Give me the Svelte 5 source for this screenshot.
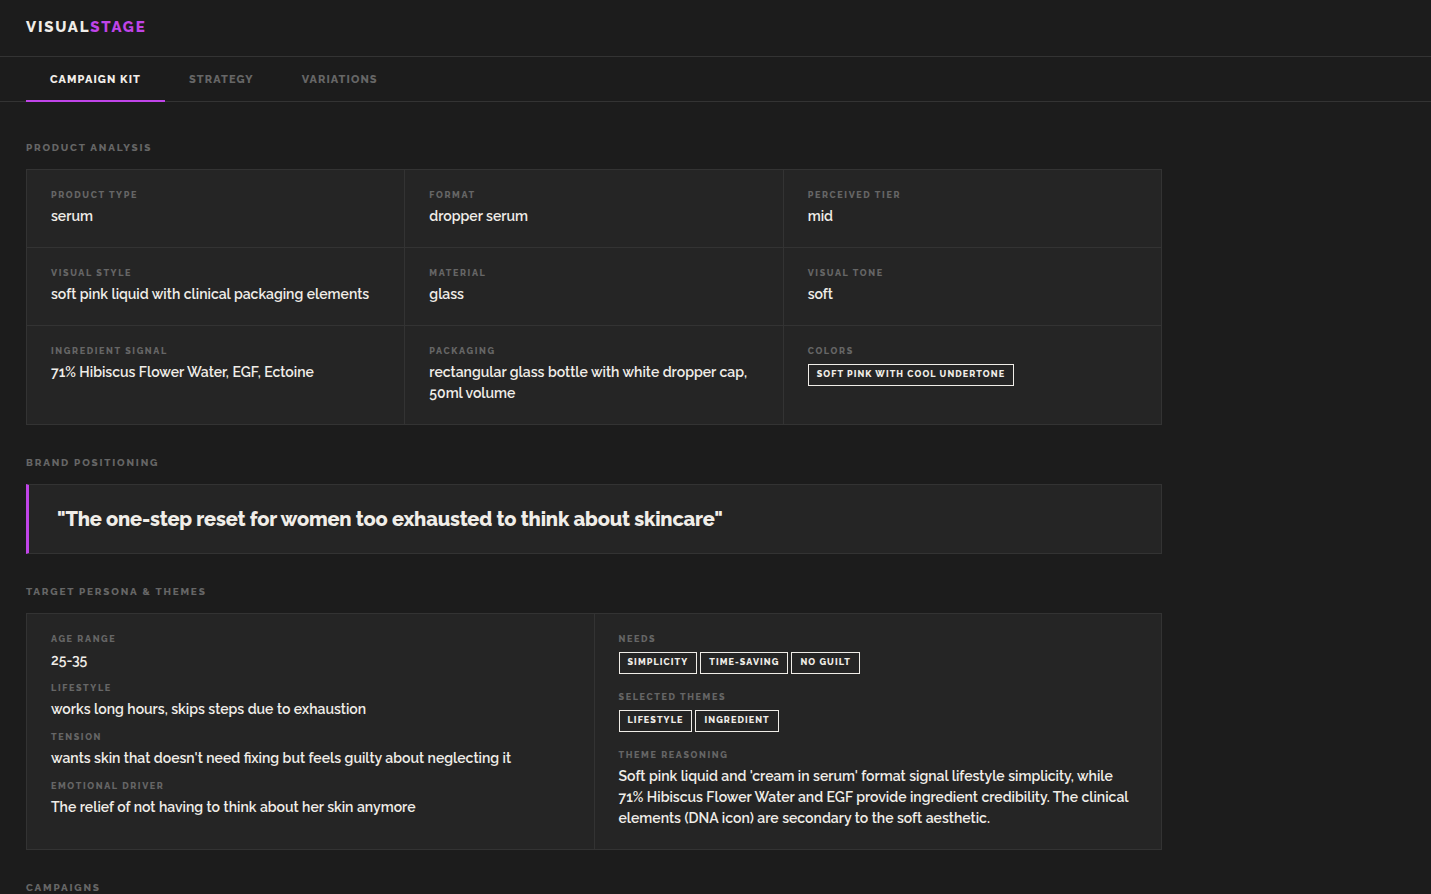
<script lang="ts">
	type Field = {
		label: string;
		value?: string;
		tags?: string[];
	};

	const tabs = ['Campaign Kit', 'Strategy', 'Variations'];
	let activeTab = $state(0);

	const analysis: Field[] = [
		{ label: 'Product Type', value: 'serum' },
		{ label: 'Format', value: 'dropper serum' },
		{ label: 'Perceived Tier', value: 'mid' },
		{ label: 'Visual Style', value: 'soft pink liquid with clinical packaging elements' },
		{ label: 'Material', value: 'glass' },
		{ label: 'Visual Tone', value: 'soft' },
		{ label: 'Ingredient Signal', value: '71% Hibiscus Flower Water, EGF, Ectoine' },
		{
			label: 'Packaging',
			value: 'rectangular glass bottle with white dropper cap, 50ml volume'
		},
		{ label: 'Colors', tags: ['soft pink with cool undertone'] }
	];

	const positioning = 'The one-step reset for women too exhausted to think about skincare';

	const persona: Field[] = [
		{ label: 'Age Range', value: '25-35' },
		{ label: 'Lifestyle', value: 'works long hours, skips steps due to exhaustion' },
		{
			label: 'Tension',
			value: "wants skin that doesn't need fixing but feels guilty about neglecting it"
		},
		{ label: 'Emotional Driver', value: 'The relief of not having to think about her skin anymore' }
	];

	const themes: Field[] = [
		{ label: 'Needs', tags: ['simplicity', 'time-saving', 'no guilt'] },
		{ label: 'Selected Themes', tags: ['lifestyle', 'ingredient'] },
		{
			label: 'Theme Reasoning',
			value:
				"Soft pink liquid and 'cream in serum' format signal lifestyle simplicity, while 71% Hibiscus Flower Water and EGF provide ingredient credibility. The clinical elements (DNA icon) are secondary to the soft aesthetic."
		}
	];
</script>

{#snippet fieldBody(field: Field)}
	<dt>{field.label}</dt>
	{#if field.tags}
		<dd class="tags">
			{#each field.tags as tag}
				<span class="tag">{tag}</span>
			{/each}
		</dd>
	{:else}
		<dd>{field.value}</dd>
	{/if}
{/snippet}

<header>
	<div class="logo">VISUAL<span>STAGE</span></div>
</header>

<nav>
	{#each tabs as tab, i}
		<button class:active={i === activeTab} onclick={() => (activeTab = i)}>{tab}</button>
	{/each}
</nav>

<main>
	<section>
		<h2>Product Analysis</h2>
		<dl class="grid thirds">
			{#each analysis as field}
				<div class="cell">
					{@render fieldBody(field)}
				</div>
			{/each}
		</dl>
	</section>

	<section>
		<h2>Brand Positioning</h2>
		<blockquote>"{positioning}"</blockquote>
	</section>

	<section>
		<h2>Target Persona &amp; Themes</h2>
		<div class="grid halves">
			{#each [persona, themes] as column}
				<dl class="cell stack">
					{#each column as field}
						<div class:tagged={field.tags}>
							{@render fieldBody(field)}
						</div>
					{/each}
				</dl>
			{/each}
		</div>
	</section>

	<section>
		<h2>Campaigns</h2>
	</section>
</main>

<style>
	:global(body) {
		margin: 0;
		background: #1c1c1c;
		color: #f0ede8;
		font-family: Raleway, Lato, 'Open Sans', sans-serif;
		font-size: 14px;
		font-weight: 600;
		line-height: 21px;
	}

	header {
		padding: 16px 26px 18px;
		border-bottom: 1px solid #333;
	}
	.logo {
		font-size: 15px;
		font-weight: 800;
		line-height: 22px;
		letter-spacing: 0.12em;
	}
	.logo span {
		color: #c044e8;
	}

	nav {
		display: flex;
		padding: 0 26px;
		border-bottom: 1px solid #333;
	}
	nav button {
		margin: 0 0 -1px;
		padding: 15px 24px 12px;
		border: none;
		border-bottom: 2px solid transparent;
		background: none;
		color: #666;
		font-family: inherit;
		font-size: 11px;
		font-weight: 800;
		line-height: 16px;
		letter-spacing: 0.1em;
		text-transform: uppercase;
		cursor: pointer;
	}
	nav button.active {
		color: #f0ede8;
		border-bottom-color: #c044e8;
	}

	main {
		box-sizing: border-box;
		max-width: 1188px;
		padding: 38px 26px;
	}
	section {
		margin-bottom: 30px;
	}
	h2 {
		margin: 0 0 14px;
		color: #666;
		font-size: 10px;
		font-weight: 800;
		line-height: 15px;
		letter-spacing: 0.18em;
		text-transform: uppercase;
	}

	/* the 1px gaps let the line colour show between the cells */
	.grid {
		display: grid;
		gap: 1px;
		margin: 0;
		border: 1px solid #333;
		background: #333;
	}
	.thirds {
		grid-template-columns: repeat(3, 1fr);
	}
	.halves {
		grid-template-columns: repeat(2, 1fr);
	}
	.cell {
		margin: 0;
		padding: 20px 24px;
		background: #252525;
	}
	.stack {
		display: flex;
		flex-direction: column;
		gap: 12px;
	}
	.stack .tagged {
		padding-bottom: 6px;
	}

	dt {
		margin-bottom: 6px;
		color: #666;
		font-size: 9px;
		font-weight: 800;
		line-height: 10px;
		letter-spacing: 0.18em;
		text-transform: uppercase;
	}
	dd {
		margin: 0;
	}
	.tags {
		display: flex;
		flex-wrap: wrap;
		gap: 3px;
		padding-top: 2px;
	}
	.tag {
		padding: 3px 8px 5px;
		border: 1px solid #f0ede8;
		font-size: 9px;
		font-weight: 800;
		line-height: 12px;
		letter-spacing: 0.12em;
		text-transform: uppercase;
	}

	blockquote {
		margin: 0;
		padding: 22px 28px;
		border: 1px solid #333;
		border-left: 3px solid #c044e8;
		background: #252525;
		font-size: 20px;
		font-weight: 800;
		line-height: 24px;
		letter-spacing: -0.01em;
	}
</style>
